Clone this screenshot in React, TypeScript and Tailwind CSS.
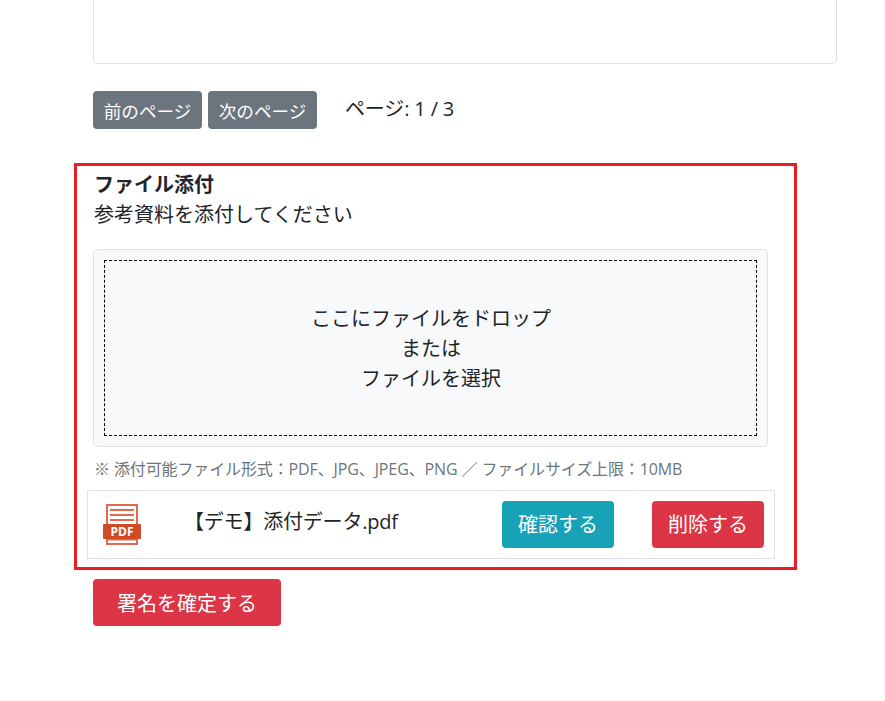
export default function App() {
  const font = { fontFamily: '"Open Sans","Noto Sans CJK JP",sans-serif' };
  return (
    <div style={font} className="w-[885px] h-[701px] overflow-hidden bg-white text-[#212529] pl-[93px] text-[20px]">
      <div className="w-[744px] h-[64px] border border-t-0 border-[#dee2e6] rounded-b-[5px]" />
      <div className="flex items-start mt-[27px] h-[38px]">
        <button className="w-[109px] h-[38px] bg-[#6c757d] text-white rounded-[4px] text-[17.6px] leading-[38px] pt-[1px]">前のページ</button>
        <button className="w-[109px] h-[38px] ml-[6px] bg-[#6c757d] text-white rounded-[4px] text-[17.6px] leading-[38px] pt-[1px]">次のページ</button>
        <span className="ml-[28px] text-[20px] leading-[35px] tracking-[-0.15px]">ページ: 1 / 3</span>
      </div>
      <div className="ml-[-19px] mt-[34px] w-[723px] h-[407px] border-[3px] border-[#ed1c24] px-[3px] pt-[4px]">
        <div className="pl-[14px] font-bold text-[20px] leading-[30px]">ファイル添付</div>
        <div className="pl-[14px] text-[20px] leading-[30px]">参考資料を添付してください</div>
        <div className="ml-[13px] mt-[19px] w-[675px] h-[198px] bg-[#f8f9fa] border border-[#dee2e6] rounded-[5px] p-[10px]">
          <div className="h-[176px] border border-dashed border-black flex flex-col items-center justify-center leading-[30px] text-[20px] pt-[2px] pl-[1px]">
            <div>ここにファイルをドロップ</div>
            <div>または</div>
            <div>ファイルを選択</div>
          </div>
        </div>
        <div className="pl-[14px] mt-[10px] text-[16px] leading-[24px] text-[#6c757d] tracking-[-0.12px]">※ 添付可能ファイル形式：PDF、JPG、JPEG、PNG ／ ファイルサイズ上限：10MB</div>
        <div className="ml-[7px] mt-[9px] w-[688px] h-[69px] border border-[#dee2e6] flex items-center">
          <svg width="38" height="42" viewBox="0 0 38 42" className="ml-[15px] shrink-0">
            <rect x="3" y="0" width="32" height="41" fill="#e0694f" />
            <rect x="5" y="2" width="28" height="18" fill="#fff" />
            <rect x="7" y="5" width="24" height="2" fill="#e0694f" />
            <rect x="7" y="10" width="24" height="2" fill="#e0694f" />
            <rect x="7" y="15" width="24" height="2" fill="#e0694f" />
            <rect x="0" y="20" width="38" height="15" rx="1" fill="#d04a26" />
            <rect x="5" y="36.5" width="28" height="2.5" fill="#fff" />
            <text x="19" y="32" textAnchor="middle" fontSize="12" fontWeight="700" fill="#fff" fontFamily="Open Sans">PDF</text>
          </svg>
          <div className="ml-[43px] w-[318px] text-[20px] leading-[30px] mt-[-6px] tracking-[-0.2px]">【デモ】添付データ.pdf</div>
          <button className="w-[112px] h-[47px] bg-[#17a2b8] text-white rounded-[4px] text-[20px] pt-[1px]">確認する</button>
          <button className="ml-[38px] w-[112px] h-[47px] bg-[#dc3545] text-white rounded-[4px] text-[20px] pt-[1px]">削除する</button>
        </div>
      </div>
      <button className="mt-[9px] w-[188px] h-[47px] bg-[#dc3545] text-white rounded-[4px] text-[20px] pt-[2px]">署名を確定する</button>
    </div>
  );
}
